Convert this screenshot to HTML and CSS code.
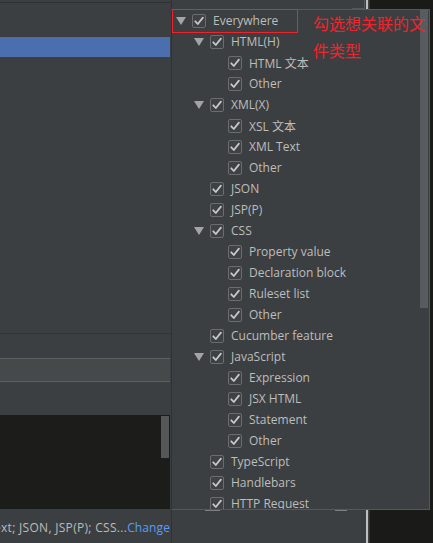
FILE: index.html
```html
<!DOCTYPE html>
<html>
<head>
<meta charset="utf-8">
<link rel="stylesheet" href="styles.css">
</head>
<body>
<div class="screen">
  <div class="left">
    <div class="topline"></div>
    <div class="blk h34"></div>
    <div class="selrow"></div>
    <div class="blk h277"></div>
    <div class="divider"></div>
    <div class="blk h24"></div>
    <div class="field"></div>
    <div class="blk h33"></div>
    <div class="console"><div class="console-scroll"></div></div>
    <div class="footer"><span class="ftext">Text; JSON, JSP(P); CSS...<span class="link">Change</span></span></div>
  </div>
  <div class="splitter"></div>
  <div class="middle">
    <div class="mid-top"><div class="mid-field"></div></div>
    <div class="mid-marks"><span class="mark m1"></span><span class="mark m2"></span></div>
  </div>
  <div class="vbar"></div>
  <div class="dark"></div>
</div>

<div class="popup">
  <div class="tree">
    <div class="row l0"><span class="tog"><i class="tri"></i></span><span class="cb"><svg viewBox="0 0 12 12"><path d="M2.3 6.3 L4.8 9 L9.9 2.6"/></svg></span><span class="label">Everywhere</span></div>
    <div class="row l1"><span class="tog"><i class="tri"></i></span><span class="cb"><svg viewBox="0 0 12 12"><path d="M2.3 6.3 L4.8 9 L9.9 2.6"/></svg></span><span class="label">HTML(H)</span></div>
    <div class="row l2"><span class="tog"></span><span class="cb"><svg viewBox="0 0 12 12"><path d="M2.3 6.3 L4.8 9 L9.9 2.6"/></svg></span><span class="label">HTML 文本</span></div>
    <div class="row l2"><span class="tog"></span><span class="cb"><svg viewBox="0 0 12 12"><path d="M2.3 6.3 L4.8 9 L9.9 2.6"/></svg></span><span class="label">Other</span></div>
    <div class="row l1"><span class="tog"><i class="tri"></i></span><span class="cb"><svg viewBox="0 0 12 12"><path d="M2.3 6.3 L4.8 9 L9.9 2.6"/></svg></span><span class="label">XML(X)</span></div>
    <div class="row l2"><span class="tog"></span><span class="cb"><svg viewBox="0 0 12 12"><path d="M2.3 6.3 L4.8 9 L9.9 2.6"/></svg></span><span class="label">XSL 文本</span></div>
    <div class="row l2"><span class="tog"></span><span class="cb"><svg viewBox="0 0 12 12"><path d="M2.3 6.3 L4.8 9 L9.9 2.6"/></svg></span><span class="label">XML Text</span></div>
    <div class="row l2"><span class="tog"></span><span class="cb"><svg viewBox="0 0 12 12"><path d="M2.3 6.3 L4.8 9 L9.9 2.6"/></svg></span><span class="label">Other</span></div>
    <div class="row l1"><span class="tog"></span><span class="cb"><svg viewBox="0 0 12 12"><path d="M2.3 6.3 L4.8 9 L9.9 2.6"/></svg></span><span class="label">JSON</span></div>
    <div class="row l1"><span class="tog"></span><span class="cb"><svg viewBox="0 0 12 12"><path d="M2.3 6.3 L4.8 9 L9.9 2.6"/></svg></span><span class="label">JSP(P)</span></div>
    <div class="row l1"><span class="tog"><i class="tri"></i></span><span class="cb"><svg viewBox="0 0 12 12"><path d="M2.3 6.3 L4.8 9 L9.9 2.6"/></svg></span><span class="label">CSS</span></div>
    <div class="row l2"><span class="tog"></span><span class="cb"><svg viewBox="0 0 12 12"><path d="M2.3 6.3 L4.8 9 L9.9 2.6"/></svg></span><span class="label">Property value</span></div>
    <div class="row l2"><span class="tog"></span><span class="cb"><svg viewBox="0 0 12 12"><path d="M2.3 6.3 L4.8 9 L9.9 2.6"/></svg></span><span class="label">Declaration block</span></div>
    <div class="row l2"><span class="tog"></span><span class="cb"><svg viewBox="0 0 12 12"><path d="M2.3 6.3 L4.8 9 L9.9 2.6"/></svg></span><span class="label">Ruleset list</span></div>
    <div class="row l2"><span class="tog"></span><span class="cb"><svg viewBox="0 0 12 12"><path d="M2.3 6.3 L4.8 9 L9.9 2.6"/></svg></span><span class="label">Other</span></div>
    <div class="row l1"><span class="tog"></span><span class="cb"><svg viewBox="0 0 12 12"><path d="M2.3 6.3 L4.8 9 L9.9 2.6"/></svg></span><span class="label">Cucumber feature</span></div>
    <div class="row l1"><span class="tog"><i class="tri"></i></span><span class="cb"><svg viewBox="0 0 12 12"><path d="M2.3 6.3 L4.8 9 L9.9 2.6"/></svg></span><span class="label">JavaScript</span></div>
    <div class="row l2"><span class="tog"></span><span class="cb"><svg viewBox="0 0 12 12"><path d="M2.3 6.3 L4.8 9 L9.9 2.6"/></svg></span><span class="label">Expression</span></div>
    <div class="row l2"><span class="tog"></span><span class="cb"><svg viewBox="0 0 12 12"><path d="M2.3 6.3 L4.8 9 L9.9 2.6"/></svg></span><span class="label">JSX HTML</span></div>
    <div class="row l2"><span class="tog"></span><span class="cb"><svg viewBox="0 0 12 12"><path d="M2.3 6.3 L4.8 9 L9.9 2.6"/></svg></span><span class="label">Statement</span></div>
    <div class="row l2"><span class="tog"></span><span class="cb"><svg viewBox="0 0 12 12"><path d="M2.3 6.3 L4.8 9 L9.9 2.6"/></svg></span><span class="label">Other</span></div>
    <div class="row l1"><span class="tog"></span><span class="cb"><svg viewBox="0 0 12 12"><path d="M2.3 6.3 L4.8 9 L9.9 2.6"/></svg></span><span class="label">TypeScript</span></div>
    <div class="row l1"><span class="tog"></span><span class="cb"><svg viewBox="0 0 12 12"><path d="M2.3 6.3 L4.8 9 L9.9 2.6"/></svg></span><span class="label">Handlebars</span></div>
    <div class="row l1"><span class="tog"></span><span class="cb"><svg viewBox="0 0 12 12"><path d="M2.3 6.3 L4.8 9 L9.9 2.6"/></svg></span><span class="label">HTTP Request</span></div>
  </div>
  <div class="vscroll"></div>
</div>

<div class="annot-box"></div>
<div class="annot-text">勾选想关联的文<br>件类型</div>
</body>
</html>
```

FILE: styles.css
```css
html, body {
  margin: 0;
  padding: 0;
  width: 433px;
  height: 543px;
  overflow: hidden;
  background: #3c3f41;
  font-family: "Open Sans", "Noto Sans CJK SC", sans-serif;
}

.screen {
  display: flex;
  width: 433px;
  height: 543px;
}

.left {
  width: 171px;
  padding-right: 1px;
  box-sizing: border-box;
  display: flex;
  flex-direction: column;
  flex: none;
}

.topline { height: 1px; margin-top: 2px; background: #2e3031; }
.blk { flex: none; }
.h34 { height: 34px; }
.h277 { height: 276px; }
.h24 { height: 24px; }
.h33 { height: 33px; }

.selrow { height: 20px; background: #4b6eaf; }
.divider { height: 1px; background: #323436; }
.field {
  height: 22px;
  background: #45494a;
  border-top: 1px solid #5e6163;
  border-bottom: 1px solid #5e6163;
}

.console {
  height: 93px;
  background: #1c1c1a;
  display: flex;
  justify-content: flex-end;
  padding-top: 1px;
}
.console-scroll {
  width: 8px;
  height: 42px;
  margin-right: 1px;
  background: #565757;
}

.footer {
  height: 33px;
  display: flex;
  justify-content: flex-end;
  align-items: center;
  padding-top: 3px;
  box-sizing: border-box;
  overflow: hidden;
  white-space: nowrap;
  font-size: 12px;
  color: #bbbbbb;
}
.ftext { flex: none; letter-spacing: 0.3px; }
.link { color: #589df6; letter-spacing: 0.1px; }

.splitter { width: 1px; background: #2f3133; flex: none; }

.middle {
  width: 194px;
  flex: none;
  display: flex;
  flex-direction: column;
}
.mid-top {
  height: 510px;
  display: flex;
  justify-content: flex-end;
}
.mid-field {
  width: 12px;
  height: 8px;
  border-right: 1px solid #55585a;
  border-bottom: 1px solid #55585a;
  margin-right: 1px;
}
.mid-marks { position: relative; height: 2px; }
.mark { display: block; height: 1px; background: #7b7e80; float: left; }
.m1 { width: 15px; margin-left: 33px; }
.m2 { width: 12px; margin-left: 115px; }

.vbar {
  width: 4px;
  flex: none;
  background: linear-gradient(to right, #bfbfbf 0, #bfbfbf 2px, #4a4a48 2px, #2a2a28 4px);
}
.dark {
  flex: 1;
  background: #1a1a18;
}

/* popup */
.popup {
  position: absolute;
  left: 171px;
  top: 9px;
  width: 259px;
  height: 501px;
  box-sizing: border-box;
  background: #3c3f41;
  border: 1px solid #56595b;
  border-left-color: #2f3133;
  overflow: hidden;
}
.tree {
  font-size: 12px;
  color: #bdbdbd;
}
.row {
  height: 21px;
  display: flex;
  align-items: center;
  white-space: nowrap;
}
.l0 { padding-left: 4px; }
.l1 { padding-left: 22px; }
.l2 { padding-left: 40px; }

.tog {
  width: 16px;
  flex: none;
  display: flex;
  align-items: center;
}
.tri {
  display: block;
  width: 0;
  height: 0;
  border-left: 5px solid transparent;
  border-right: 5px solid transparent;
  border-top: 8px solid #a4a4a4;
  margin-top: 1px;
}
.cb {
  width: 14px;
  height: 14px;
  box-sizing: border-box;
  border: 1px solid #6a6c6e;
  border-radius: 2px;
  background: #3e4244;
  flex: none;
  display: flex;
  margin-right: 7px;
}
.cb svg { width: 12px; height: 12px; }
.cb path {
  fill: none;
  stroke: #c8c8c8;
  stroke-width: 1.8;
  stroke-linecap: round;
  stroke-linejoin: round;
}

.vscroll {
  position: absolute;
  left: 248px;
  top: 0px;
  width: 8px;
  height: 298px;
  background: #595c5e;
}

/* annotation */
.annot-box {
  position: absolute;
  left: 172px;
  top: 9px;
  width: 126px;
  height: 24px;
  box-sizing: border-box;
  border: 1px solid #f0232a;
}
.annot-text {
  position: absolute;
  left: 313px;
  top: 10px;
  font-family: "Noto Sans CJK SC", sans-serif;
  font-size: 16px;
  line-height: 27px;
  color: #f4222b;
}
```
